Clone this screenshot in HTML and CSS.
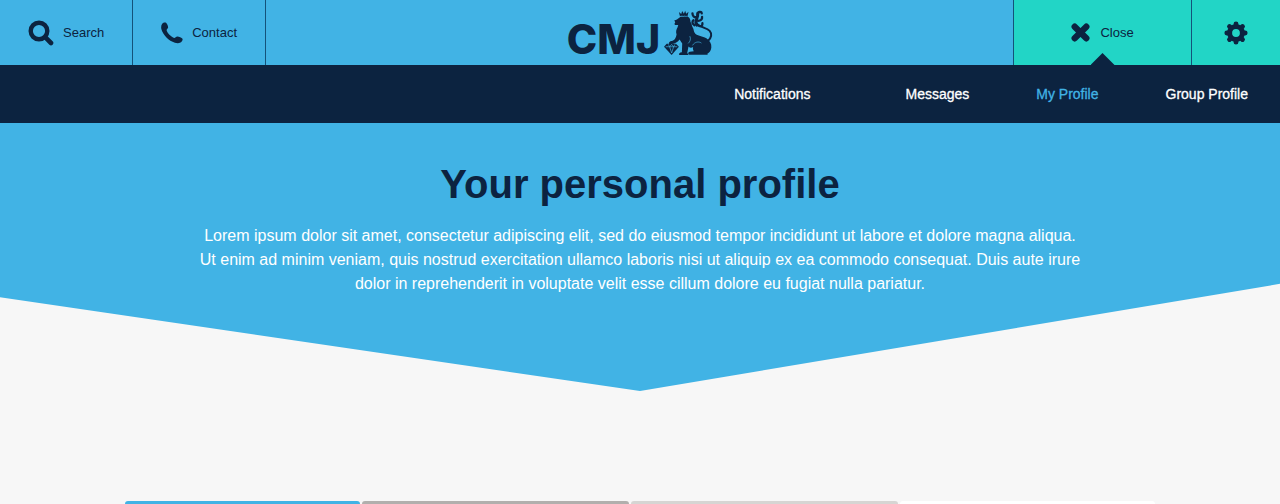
FILE: index.html
```html
<!DOCTYPE html>
<html lang="en">
<head>
<meta charset="utf-8">
<meta name="viewport" content="width=device-width, initial-scale=1">
<title>CMJ – Your personal profile</title>
<link rel="stylesheet" href="styles.css">
</head>
<body>
<header class="topbar">
  <div class="topbar-side">
    <button class="bar-button search" type="button">
      <svg class="icon-search" viewBox="0 0 26 26" aria-hidden="true"><circle cx="11" cy="11" r="8.3" fill="none" stroke="currentColor" stroke-width="4.4"/><path d="M17.2 17.2l5.800 5.800" stroke="currentColor" stroke-width="4.6" stroke-linecap="round"/></svg>
      <span>Search</span>
    </button>
    <button class="bar-button contact" type="button">
      <svg class="icon-phone" viewBox="0 0 22 22" aria-hidden="true"><path fill="currentColor" d="M1.200 1.800C2.200.5 4.400.1 5.300 1c1 1 1.900 3.300 1.800 4.500-.1 1-1.500 1.800-1.500 2.500.1 2.500 5 7.300 7.600 8 .9.200 1.900-1.700 3.200-1.600 1.400 0 4.500 1.300 5.100 2.300.5 1-.5 3.100-2 3.900-1.600.9-3.800.8-5.600.2C7.800 19 2 13 .5 7.600-.1 5.400.1 3.200 1.200 1.800z"/></svg>
      <span>Contact</span>
    </button>
  </div>
  <a class="logo" href="#" aria-label="CMJ home">
    <span class="logo-text">CMJ</span>
    <svg class="logo-lion" viewBox="308 28 148 136" aria-hidden="true">
      <g fill="currentColor">
        <path d="M356 47l-3-13 7 6 3-9 5 8 4-9 3 9 7-6-3 14z"/>
        <path d="M357 49l22-1c7 3 9 9 9 16 5 5 3 10 6 15 5 8 3 14 8 20 8 8 22 8 34 14 11 7 16 17 15 28-1 10-6 15-12 19 2 2 1 3-2 3h-52c-5 0-5-8 1-9l12-1c-3-5-3-9-2-13-6 3-10 2-14-2l-4 21c3 0 4 3 3 5h-27c-2-4 1-7 8-8l1-27-8-12c-5 9-14 11-23 14-5 3-10 0-9-4 1-4 7-5 11-6 8-4 10-10 12-19-3-8-1-15 3-22l2-7-10 0c-3-3 1-8 1-8l-3-5 8-3z"/>
        <path d="M308 139l8-9h28l9 9-22 25z"/>
      </g>
      <g fill="none" stroke="currentColor" stroke-linecap="round">
        <path d="M442 120c9-8 12-20 4-29-9-9-30-11-38-21" stroke-width="6"/>
        <path d="M407 74c-9-13 5-20 3-36" stroke-width="9"/>
        <path d="M410 44c-1-12 11-13 12-6M394 38c0 7 5 12 10 12M411 61c8 0 13-5 12-12M400 74c-8-5-7-12-3-15M414 76c7 2 11-1 10-8" stroke-width="7"/>
      </g>
      <g fill="none" stroke="#41b3e5" stroke-width="2">
        <path d="M313 139h35M321 132l4 7 6 19 6-19 4-7M325 139l6-7 6 7"/>
        <path d="M394 135c7-11 19-13 27-7M386 107c4 8 1 17-5 22"/>
      </g>
      <path d="M354 46l5 1 3-2 4 2 4-2 4 2 4-1" fill="none" stroke="#41b3e5"/>
    </svg>
  </a>
  <div class="topbar-side topbar-end">
    <button class="bar-button close" type="button" aria-expanded="true">
      <svg class="icon-close" viewBox="0 0 18 18" aria-hidden="true"><path d="M3.500 3.500l11 11M14.500 3.500l-11 11" stroke="currentColor" stroke-width="6"  stroke-linecap="round"/></svg>
      <span>Close</span>
    </button>
    <button class="bar-button settings" type="button" aria-label="Settings">
      <svg class="icon-gear" viewBox="-12 -12 24 24" aria-hidden="true">
        <circle r="6.400" fill="none" stroke="currentColor" stroke-width="5"/>
        <g stroke="currentColor" stroke-width="4.800" stroke-linecap="round">
          <path d="M0-9.200V-7M0 9.200V7M-9.200 0H-7M9.200 0H7M-6.500-6.500L-5-5M6.500 6.500L5 5M-6.500 6.500L-5 5M6.500-6.500L5-5"/>
        </g>
      </svg>
    </button>
  </div>
</header>
<nav class="subnav" aria-label="Account">
  <a class="subnav-link spaced" href="#">Notifications</a>
  <a class="subnav-link" href="#">Messages</a>
  <a class="subnav-link current" href="#" aria-current="page">My Profile</a>
  <a class="subnav-link" href="#">Group Profile</a>
</nav>
<main class="page">
  <section class="hero">
    <h1 class="hero-title">Your personal profile</h1>
    <p class="hero-text">Lorem ipsum dolor sit amet, consectetur adipiscing elit, sed do eiusmod tempor incididunt ut labore et dolore magna aliqua. Ut enim ad minim veniam, quis nostrud exercitation ullamco laboris nisi ut aliquip ex ea commodo consequat. Duis aute irure dolor in reprehenderit in voluptate velit esse cillum dolore eu fugiat nulla pariatur.</p>
  </section>
  <div class="steps">
    <div class="step step-active"></div>
    <div class="step step-second"></div>
    <div class="step step-third"></div>
    <div class="step step-last"></div>
  </div>
</main>
</body>
</html>
```

FILE: styles.css
```css
:root {
  --navy: #0c2340;
  --blue: #41b3e5;
  --teal: #22d5c6;
  --line: #14527a;
}

* {
  box-sizing: border-box;
}

body {
  display: flex;
  flex-direction: column;
  min-height: 100vh;
  margin: 0;
  background: #f7f7f7;
  color: var(--navy);
  font-family: "Liberation Sans", Arial, sans-serif;
}

.topbar {
  display: grid;
  grid-template-columns: 1fr auto 1fr;
  min-height: 65px;
  background: var(--blue);
}

.topbar-side {
  display: flex;
}

.topbar-end {
  justify-content: flex-end;
}

.bar-button {
  display: flex;
  align-items: center;
  margin: 0;
  border: 0;
  background: none;
  color: var(--navy);
  font: inherit;
  font-size: 13px;
  cursor: pointer;
}

.search {
  gap: 9px;
  padding: 0 28px;
  border-right: 1px solid var(--line);
}

.contact {
  gap: 9px;
  padding: 0 28px;
  border-right: 1px solid var(--line);
}

.close {
  position: relative;
  justify-content: center;
  gap: 10px;
  width: 178px;
  border-left: 1px solid var(--line);
  background: var(--teal);
}

.close::after {
  content: "";
  position: absolute;
  bottom: 0;
  left: 50%;
  width: 24px;
  height: 12px;
  margin-left: -12px;
  background: var(--navy);
  clip-path: polygon(50% 0, 100% 100%, 0 100%);
}

.settings {
  justify-content: center;
  width: 89px;
  border-left: 1px solid var(--line);
  background: var(--teal);
}

.icon-search {
  width: 26px;
  height: 26px;
}

.icon-phone {
  width: 22px;
  height: 22px;
}

.icon-close {
  width: 19px;
  height: 19px;
}

.icon-gear {
  width: 24px;
  height: 24px;
}

.logo {
  display: flex;
  align-items: flex-end;
  gap: 4px;
  padding-bottom: 10px;
  color: var(--navy);
  text-decoration: none;
}

.logo-text {
  font-family: Inter, sans-serif;
  font-size: 41px;
  font-weight: 800;
  line-height: 32px;
}

.logo-lion {
  width: 49px;
  height: 45px;
}

.subnav {
  display: flex;
  align-items: center;
  justify-content: flex-end;
  gap: 67px;
  min-height: 58px;
  padding: 0 32px;
  background: var(--navy);
}

.subnav-link {
  color: #fff;
  font-size: 14px;
  line-height: 20px;
  text-decoration: none;
  -webkit-text-stroke: 0.3px currentColor;
}

.spaced {
  margin-right: 28px;
}

.current {
  color: var(--blue);
}

.page {
  display: flex;
  flex: 1;
  flex-direction: column;
}

.hero {
  padding: 37px 24px 95px;
  background: var(--blue);
  clip-path: polygon(0 0, 100% 0, 100% 60%, 50% 100%, 0 65%);
  text-align: center;
}

.hero-title {
  margin: 0 0 16px;
  font-size: 40px;
  line-height: 48px;
}

.hero-text {
  max-width: 888px;
  margin: 0 auto;
  color: #fff;
  font-size: 16px;
  line-height: 24px;
}

.steps {
  display: grid;
  flex: 1;
  grid-template-columns: 235fr 267fr 267fr 255fr;
  gap: 2px;
  width: 100%;
  max-width: 1030px;
  margin: 110px auto 0;
}

.step {
  border-radius: 3px 3px 0 0;
}

.step-active {
  background: var(--blue);
}

.step-second {
  background: #b1afad;
}

.step-third {
  background: #d6d5d3;
}

.step-last {
  background: #fff;
}
```
